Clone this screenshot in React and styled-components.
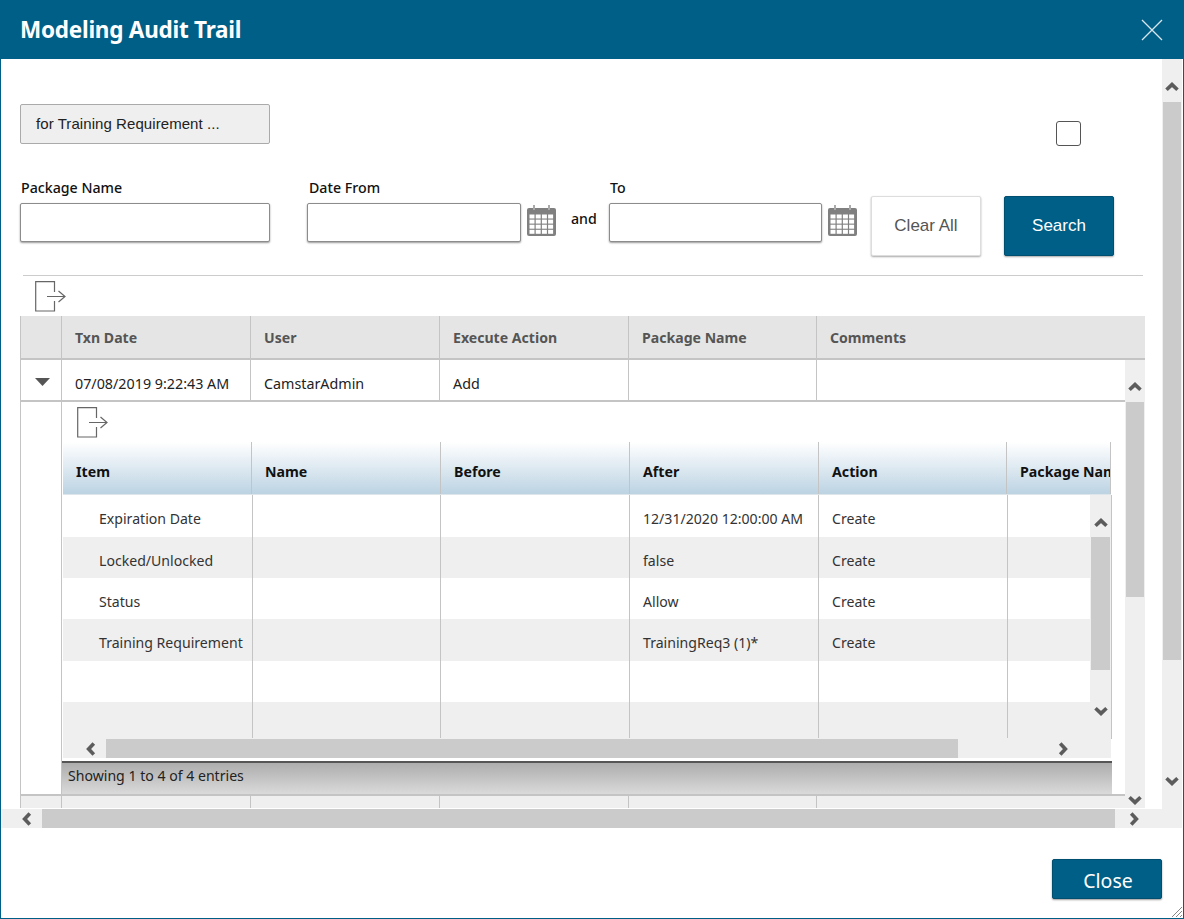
import React from 'react';
import styled, { createGlobalStyle } from 'styled-components';

const GlobalStyle = createGlobalStyle`
  html, body {
    margin: 0;
    height: 100%;
    background: #fff;
    overflow: hidden;
  }
  * { box-sizing: border-box; }
`;

const UI_FONT = `"Noto Sans", "Open Sans", sans-serif`;
const ARIAL = `"Liberation Sans", Arial, sans-serif`;
const TEAL = '#005f87';
const TRACK = '#efefef';
const THUMB = '#cbcbcb';
const LINE = '#c4c4c4';

const Window = styled.div`
  position: relative;
  width: 1184px;
  height: 919px;
  display: flex;
  flex-direction: column;
  border: 1px solid ${TEAL};
  border-top: 0;
  background: #fff;
  font-family: ${UI_FONT};
`;

const Header = styled.header`
  flex: none;
  height: 59px;
  margin: 0 -1px;
  padding: 0 21px 0 20px;
  display: flex;
  align-items: center;
  justify-content: space-between;
  background: ${TEAL};
  color: #fff;
`;

const Title = styled.h1`
  margin: 0;
  font-size: 22.5px;
  font-weight: 700;
  letter-spacing: -0.25px;
`;

const CloseX = styled.svg`
  width: 22px;
  height: 22px;
`;

const Viewport = styled.div`
  flex: none;
  width: 1181px;
  height: 769px;
  display: grid;
  grid-template-columns: 1161px 20px;
  grid-template-rows: 750px 19px;
`;

const Pane = styled.main`
  padding: 45px 0 0 19px;
  overflow: hidden;
`;

const TopRow = styled.div`
  display: flex;
  align-items: flex-start;
  height: 40px;
`;

const Chip = styled.button`
  width: 250px;
  height: 40px;
  padding: 0 0 2px 15px;
  text-align: left;
  font: 15px ${ARIAL};
  letter-spacing: 0.07px;
  color: #222;
  background: ${TRACK};
  border: 1px solid #aaa;
  border-radius: 2px;
`;

const Check = styled.input.attrs({ type: 'checkbox' })`
  appearance: none;
  width: 25px;
  height: 25px;
  margin: 17px 0 0 786px;
  background: #fff;
  border: 1px solid #555;
  border-radius: 3px;
`;

const FilterRow = styled.div`
  display: flex;
  align-items: flex-start;
  height: 76px;
  margin-top: 36px;
`;

const Field = styled.div`
  display: flex;
  flex-direction: column;
  width: ${p => p.$width}px;
  margin-right: ${p => p.$gap || 0}px;
`;

const Label = styled.label`
  height: 23px;
  padding-left: ${p => p.$inset || 1}px;
  font-size: 14.2px;
  line-height: 16px;
  font-weight: 500;
  color: #111;
`;

const TextBox = styled.input`
  width: 100%;
  height: 39px;
  background: #fff;
  border: 1px solid #8c8c8c;
  border-radius: 2px;
  box-shadow: 0 1px 2px rgba(0, 0, 0, 0.4);
`;

const CalendarSlot = styled.div`
  width: ${p => p.$width}px;
  height: 33px;
  margin-top: 25px;
  padding-left: 6px;
`;

const AndText = styled.span`
  width: 38px;
  margin: 30px 0 0 0;
  font-size: 14.2px;
  line-height: 18px;
  font-weight: 500;
  color: #111;
`;

const ActionButton = styled.button`
  width: 110px;
  height: 60px;
  margin: 16px ${p => p.$gap || 0}px 0 0;
  font: 17px ${ARIAL};
  color: ${p => (p.$primary ? '#fff' : '#555')};
  background: ${p => (p.$primary ? TEAL : '#fff')};
  border: 1px solid ${p => (p.$primary ? '#004f70' : '#ddd')};
  border-radius: 2px;
  box-shadow: 0 1px 2px rgba(0, 0, 0, 0.35);
`;

const Rule = styled.hr`
  width: 1120px;
  height: 1px;
  margin: 19px 0 0 3px;
  border: 0;
  background: #ccc;
`;

const ExportWrap = styled.div`
  height: 40px;
  padding: ${p => p.$top}px 0 0 ${p => p.$left}px;
`;

const Grid = styled.section`
  width: 1125px;
`;

const GridHead = styled.div`
  display: grid;
  grid-template-columns: 42px 189px 189px 189px 188px 328px;
  height: 44px;
  background: #e5e5e5;
  border-bottom: 2px solid ${LINE};
`;

const HeadCell = styled.div`
  display: flex;
  align-items: center;
  padding: 0 0 0 13px;
  font-size: 14.1px;
  font-weight: 700;
  color: #555;
  border-right: ${p => (p.$last ? 0 : `1px solid ${LINE}`)};
  border-left: ${p => (p.$first ? `1px solid ${LINE}` : 0)};
`;

const GridBody = styled.div`
  display: flex;
  height: 448px;
`;

const GridMain = styled.div`
  width: 1105px;
  display: flex;
  flex-direction: column;
`;

const DataRow = styled.div`
  display: grid;
  grid-template-columns: 42px 189px 189px 189px 188px 308px;
  flex: none;
  height: 42px;
  border-bottom: 2px solid ${LINE};
`;

const DataCell = styled.div`
  display: flex;
  align-items: center;
  padding: 6px 0 0 13px;
  font-size: 14.3px;
  color: #222;
  border-right: ${p => (p.$last ? 0 : `1px solid ${LINE}`)};
`;

const ExpandCell = styled.div`
  display: flex;
  align-items: center;
  justify-content: center;
  padding: 4px 0 0 2px;
  border-left: 1px solid ${LINE};
  border-right: 1px solid ${LINE};
`;

const Triangle = styled.svg`
  width: 15px;
  height: 8px;
`;

const DetailRow = styled.div`
  display: flex;
  flex: none;
  height: 394px;
  border-bottom: 2px solid ${LINE};
`;

const DetailGutter = styled.div`
  flex: none;
  width: 42px;
  border-left: 1px solid ${LINE};
  border-right: 1px solid ${LINE};
`;

const Detail = styled.div`
  width: 1051px;
  display: flex;
  flex-direction: column;
`;

const InnerHead = styled.div`
  display: grid;
  grid-template-columns: 189px 189px 189px 189px 188px 104px;
  flex: none;
  width: 1048px;
  height: 53px;
  margin-left: 1px;
  overflow: hidden;
  background: linear-gradient(#fff, #bcd3e3);
  border-bottom: 1px solid #dfe6ea;
`;

const InnerHeadCell = styled.div`
  padding: 21px 0 0 13px;
  font-size: 14.2px;
  font-weight: 700;
  line-height: 18px;
  color: #111;
  white-space: nowrap;
  overflow: hidden;
  border-right: 1px solid ${LINE};
`;

const InnerBody = styled.div`
  display: flex;
  flex: none;
  width: 1049px;
  height: 244px;
  margin-left: 1px;
  background: ${TRACK};
  border-right: 1px solid ${LINE};
`;

const InnerRows = styled.div`
  width: 1027px;
  display: grid;
  grid-template-rows: 42px 41px 41px 42px 41px 36px;
`;

const InnerCell = styled.div`
  display: flex;
  align-items: center;
  padding: 6px 0 0 ${p => (p.$item ? 36 : 13)}px;
  font-size: 14.1px;
  color: #333;
  white-space: nowrap;
  border-right: 1px solid ${LINE};
  &:last-child { border-right: 0; }
`;

const InnerRow = styled.div`
  display: grid;
  grid-template-columns: 190px 188px 189px 189px 189px 82px;
  background: ${p => (p.$alt ? TRACK : '#fff')};
  &:nth-child(3n + 1) ${InnerCell} { padding-top: 5px; }
`;

const StatusBar = styled.div`
  flex: none;
  display: flex;
  align-items: center;
  width: 1050px;
  height: 33px;
  margin-top: 3px;
  padding: 0 0 7px 6px;
  font-size: 14.1px;
  color: #222;
  background: linear-gradient(#adadad, #dadada);
  border-top: 2px solid #555;
`;

const GridFoot = styled.div`
  display: grid;
  grid-template-columns: 42px 189px 189px 189px 188px 308px;
  flex: 1;
  background: ${TRACK};
`;

const FootCell = styled.div`
  border-right: 1px solid ${LINE};
  border-left: ${p => (p.$first ? `1px solid ${LINE}` : 0)};
  &:last-child { border-right: 0; }
`;

const VBar = styled.div`
  display: flex;
  flex-direction: column;
  flex: none;
  width: ${p => p.$width || 20}px;
  height: ${p => (p.$height ? `${p.$height}px` : 'auto')};
  background: ${TRACK};
`;

const VArrowUp = styled.div`
  flex: none;
  height: ${p => p.$size}px;
  display: flex;
  justify-content: center;
  padding-top: ${p => p.$top}px;
`;

const VThumb = styled.div`
  flex: none;
  height: ${p => p.$size}px;
  margin: 0 1px;
  background: ${THUMB};
`;

const VArrowDown = styled.div`
  margin-top: auto;
  padding-bottom: ${p => p.$bottom}px;
  display: flex;
  justify-content: center;
`;

const HBar = styled.div`
  display: flex;
  align-items: center;
  height: 19px;
  background: ${TRACK};
  grid-column: ${p => (p.$span ? '1 / span 2' : 'auto')};
  flex: none;
`;

const InnerHBar = styled(HBar)`
  width: 1048px;
  margin-left: 1px;
`;

const HArrowLeft = styled.div`
  flex: none;
  display: flex;
  align-items: center;
  width: ${p => p.$size}px;
  padding-left: ${p => p.$inset}px;
`;

const HThumb = styled.div`
  flex: none;
  width: ${p => p.$size}px;
  height: 19px;
  background: ${THUMB};
`;

const HArrowRight = styled.div`
  margin-left: auto;
  margin-right: 43px;
  display: flex;
`;

const Footer = styled.footer`
  flex: 1;
  display: flex;
  justify-content: flex-end;
  padding: 31px 21px 0 0;
`;

const CloseButton = styled.button`
  width: 110px;
  height: 40px;
  padding: 2px 0 0 2px;
  font-family: ${UI_FONT};
  font-size: 19.5px;
  color: #fff;
  background: ${TEAL};
  border: 1px solid #004f70;
  border-radius: 2px;
  box-shadow: 0 1px 2px rgba(0, 0, 0, 0.4);
`;

const Grip = styled.svg`
  position: absolute;
  right: 0;
  bottom: 0;
  width: 12px;
  height: 12px;
`;

const CHEVRONS = {
  up: 'M1.5 7.8 L7 2.6 L12.5 7.8',
  down: 'M1.5 2.2 L7 7.4 L12.5 2.2',
  left: 'M7.8 1.5 L2.6 7 L7.8 12.5',
  right: 'M2.2 1.5 L7.4 7 L2.2 12.5',
};

const Chevron = ({ dir }) => {
  const flat = dir === 'up' || dir === 'down';
  return (
    <svg width={flat ? 14 : 10} height={flat ? 10 : 14} viewBox={flat ? '0 0 14 10' : '0 0 10 14'} fill="none">
      <path d={CHEVRONS[dir]} stroke="#5c5c5c" strokeWidth="3.6" />
    </svg>
  );
};

const ExportIcon = () => (
  <svg width="31" height="31" viewBox="0 0 31 31" fill="none" stroke="#666" strokeWidth="1.2">
    <path d="M19.5 11 V0.7 H0.7 V30 H19.5 V20" />
    <path d="M12 15.5 H30 M23.5 10 L30 15.5 L23.5 21" />
  </svg>
);

const CalendarIcon = () => (
  <svg width="29" height="31" viewBox="0 0 29 31">
    <rect x="0" y="3" width="29" height="28" rx="2" fill="#808080" />
    <rect x="6" y="0" width="2" height="5" fill="#aaa" />
    <rect x="21" y="0" width="2" height="5" fill="#aaa" />
    {[0, 1, 2, 3].map(r =>
      [0, 1, 2, 3].map(c => (
        <rect key={`${r}${c}`} x={2.5 + c * 6.2} y={9.5 + r * 5.1} width="5" height="4" fill="#fff" />
      ))
    )}
  </svg>
);

const mainHeads = ['Txn Date', 'User', 'Execute Action', 'Package Name', 'Comments'];
const innerHeads = ['Item', 'Name', 'Before', 'After', 'Action', 'Package Name'];
const innerRows = [
  ['Expiration Date', '', '', '12/31/2020 12:00:00 AM', 'Create', ''],
  ['Locked/Unlocked', '', '', 'false', 'Create', ''],
  ['Status', '', '', 'Allow', 'Create', ''],
  ['Training Requirement', '', '', 'TrainingReq3 (1)*', 'Create', ''],
  ['', '', '', '', '', ''],
  ['', '', '', '', '', ''],
];

const App = () => (
  <>
    <GlobalStyle />
    <Window>
      <Header>
        <Title>Modeling Audit Trail</Title>
        <CloseX viewBox="0 0 22 22" fill="none" stroke="#d8e6ee" strokeWidth="1.3">
          <path d="M1 1 L21 21 M21 1 L1 21" />
        </CloseX>
      </Header>

      <Viewport>
        <Pane>
          <TopRow>
            <Chip>for Training Requirement ...</Chip>
            <Check />
          </TopRow>

          <FilterRow>
            <Field $width={250} $gap={37}>
              <Label>Package Name</Label>
              <TextBox />
            </Field>
            <Field $width={214}>
              <Label $inset={2}>Date From</Label>
              <TextBox />
            </Field>
            <CalendarSlot $width={50}>
              <CalendarIcon />
            </CalendarSlot>
            <AndText>and</AndText>
            <Field $width={213}>
              <Label>To</Label>
              <TextBox />
            </Field>
            <CalendarSlot $width={49}>
              <CalendarIcon />
            </CalendarSlot>
            <ActionButton $gap={23}>Clear All</ActionButton>
            <ActionButton $primary>Search</ActionButton>
          </FilterRow>

          <Rule />
          <ExportWrap $top={5} $left={15}>
            <ExportIcon />
          </ExportWrap>

          <Grid>
            <GridHead>
              <HeadCell $first />
              {mainHeads.map((h, i) => (
                <HeadCell key={h} $last={i === mainHeads.length - 1}>{h}</HeadCell>
              ))}
            </GridHead>
            <GridBody>
              <GridMain>
                <DataRow>
                  <ExpandCell>
                    <Triangle viewBox="0 0 15 8">
                      <path d="M0 0 H15 L7.5 8 Z" fill="#555" />
                    </Triangle>
                  </ExpandCell>
                  <DataCell>07/08/2019 9:22:43 AM</DataCell>
                  <DataCell>CamstarAdmin</DataCell>
                  <DataCell>Add</DataCell>
                  <DataCell />
                  <DataCell $last />
                </DataRow>
                <DetailRow>
                  <DetailGutter />
                  <Detail>
                    <ExportWrap $top={5} $left={15}>
                      <ExportIcon />
                    </ExportWrap>
                    <InnerHead>
                      {innerHeads.map(h => (
                        <InnerHeadCell key={h}>{h}</InnerHeadCell>
                      ))}
                    </InnerHead>
                    <InnerBody>
                      <InnerRows>
                        {innerRows.map((row, r) => (
                          <InnerRow key={r} $alt={r % 2 === 1}>
                            {row.map((text, c) => (
                              <InnerCell key={c} $item={c === 0}>{text}</InnerCell>
                            ))}
                          </InnerRow>
                        ))}
                      </InnerRows>
                      <VBar $width={21}>
                        <VArrowUp $size={42} $top={23}><Chevron dir="up" /></VArrowUp>
                        <VThumb $size={133} />
                        <VArrowDown $bottom={23}><Chevron dir="down" /></VArrowDown>
                      </VBar>
                    </InnerBody>
                    <InnerHBar>
                      <HArrowLeft $size={43} $inset={23}><Chevron dir="left" /></HArrowLeft>
                      <HThumb $size={852} />
                      <HArrowRight><Chevron dir="right" /></HArrowRight>
                    </InnerHBar>
                    <StatusBar>Showing 1 to 4 of 4 entries</StatusBar>
                  </Detail>
                </DetailRow>
                <GridFoot>
                  <FootCell $first />
                  <FootCell />
                  <FootCell />
                  <FootCell />
                  <FootCell />
                  <FootCell />
                </GridFoot>
              </GridMain>
              <VBar>
                <VArrowUp $size={42} $top={22}><Chevron dir="up" /></VArrowUp>
                <VThumb $size={195} />
                <VArrowDown $bottom={3}><Chevron dir="down" /></VArrowDown>
              </VBar>
            </GridBody>
          </Grid>
        </Pane>

        <VBar $height={750}>
          <VArrowUp $size={43} $top={23}><Chevron dir="up" /></VArrowUp>
          <VThumb $size={558} />
          <VArrowDown $bottom={23}><Chevron dir="down" /></VArrowDown>
        </VBar>

        <HBar $span>
          <HArrowLeft $size={41} $inset={21}><Chevron dir="left" /></HArrowLeft>
          <HThumb $size={1073} />
          <HArrowRight><Chevron dir="right" /></HArrowRight>
        </HBar>
      </Viewport>

      <Footer>
        <CloseButton>Close</CloseButton>
      </Footer>

      <Grip viewBox="0 0 12 12" fill="none" stroke="#888" strokeWidth="1">
        <path d="M1 11 L11 1 M5 11 L11 5 M9 11 L11 9" />
      </Grip>
    </Window>
  </>
);

export default App;
